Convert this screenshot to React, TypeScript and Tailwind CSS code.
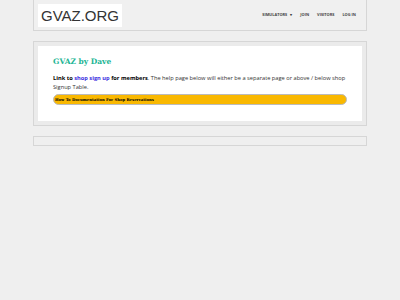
import React from "react"

export default function App() {
  return (
    <div className="min-h-[300px] w-[400px] bg-[#efefef] px-[33px] font-['Open_Sans',sans-serif]">
      <header className="flex h-[31px] items-center justify-between border border-t-0 border-[#d6d6d6] bg-[#f0f0f0] pl-[4px] pr-[10px]">
        <div className="flex h-[23px] w-[84px] items-center justify-center bg-white font-['Liberation_Sans',sans-serif] text-[15px] leading-none text-[#333]">
          GVAZ.ORG
        </div>
        <nav className="flex items-center gap-[8px] text-[3.9px] font-bold uppercase text-[#444]">
          <span>Simulators <span className="ml-[2px]">▾</span></span>
          <span>Join</span>
          <span>Visitors</span>
          <span>Log In</span>
        </nav>
      </header>

      <section className="mt-[10px] border border-[#d6d6d6] bg-[#ebebeb] p-[4px]">
        <div className="bg-white px-[15px] pb-[16px] pt-[9px]">
          <h2 className="font-['DejaVu_Serif',serif] text-[7.5px] font-bold leading-[14px] text-[#22b594]">GVAZ by Dave</h2>
          <p className="mt-[5px] whitespace-nowrap text-[5.7px] leading-[9px] text-[#333]">
            <b className="text-black">Link to <a className="text-[#3b2fe0]">shop sign up</a> for members</b>. The help page below will either be a separate page or above / below shop
            <br />
            Signup Table.
          </p>
          <div className="mt-[2px] flex h-[11px] items-center rounded-full border border-[#bbb] bg-[#f9b800] pl-[1px] font-['DejaVu_Serif',serif] text-[3.8px] font-bold text-black">
            How To Documentation For Shop Reservations
          </div>
        </div>
      </section>

      <div className="mt-[10px] h-[10px] border border-[#d6d6d6] bg-[#efefef]" />
    </div>
  )
}
